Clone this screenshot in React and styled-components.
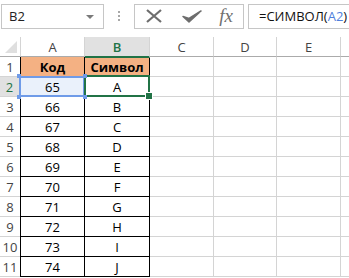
import styled, { createGlobalStyle, css } from 'styled-components';

const GlobalStyle = createGlobalStyle`
  html, body {
    margin: 0;
    padding: 0;
    background: #fff;
  }
  body {
    font-family: "Open Sans", "Liberation Sans", sans-serif;
    color: #000;
  }
`;

const codes = [65, 66, 67, 68, 69, 70, 71, 72, 73, 74];
const columns = ['A', 'B', 'C', 'D', 'E', ''];

const App = () => {
  return (
    <Page>
      <GlobalStyle />
      <Toolbar>
        <NameBox>
          <span>B2</span>
          <DropArrow />
        </NameBox>
        <Dots>
          <i /><i /><i />
        </Dots>
        <ActionBox>
          <svg width="20" height="14" viewBox="0 0 20 14">
            <path d="M3 1 L17 13 M17 1 L3 13" stroke="#6d6d6d" strokeWidth="2.2" fill="none" />
          </svg>
          <svg width="20" height="13" viewBox="0 0 20 13">
            <path d="M1 6.5 L7 12 L19 1 L7 8.5 Z" fill="#6d6d6d" stroke="#6d6d6d" strokeWidth="1.5" strokeLinejoin="round" />
          </svg>
          <Fx>fx</Fx>
        </ActionBox>
        <FormulaBox>
          =СИМВОЛ(<Ref>A2</Ref>)
        </FormulaBox>
      </Toolbar>

      <Sheet>
        <Corner><CornerMark /></Corner>
        {columns.map((c) => (
          <ColHead key={c || 'f'} $active={c === 'B'}>{c}</ColHead>
        ))}

        <RowHead>1</RowHead>
        <Cell $table $first $title>Код</Cell>
        <Cell $table $title>Символ</Cell>
        <Cell /><Cell /><Cell /><Cell />

        {codes.map((code, i) => {
          const row = i + 2;
          return [
            <RowHead key={`h${row}`} $active={row === 2}>{row}</RowHead>,
            <Cell key={`a${row}`} $table $first={row !== 2} $ref={row === 2}>
              {code}
              {row === 2 && (
                <>
                  <Handle $pos="tl" /><Handle $pos="tr" /><Handle $pos="bl" /><Handle $pos="br" />
                </>
              )}
            </Cell>,
            <Cell key={`b${row}`} $table $current={row === 2}>
              {String.fromCharCode(code)}
              {row === 2 && <FillHandle />}
            </Cell>,
            <Cell key={`c${row}`} />,
            <Cell key={`d${row}`} />,
            <Cell key={`e${row}`} />,
            <Cell key={`f${row}`} />,
          ];
        })}
      </Sheet>
    </Page>
  );
};

export default App;

const Page = styled.div`
  width: 349px;
  height: 278px;
  overflow: hidden;
  background: #fff;
`;

const Toolbar = styled.div`
  display: flex;
  align-items: center;
  height: 30px;
  padding: 2px 0 0 1px;
  box-sizing: border-box;
  margin-bottom: 7px;
`;

const boxBase = css`
  height: 25px;
  box-sizing: border-box;
  border: 1px solid #c6c6c6;
  background: #fff;
  display: flex;
  align-items: center;
`;

const NameBox = styled.div`
  ${boxBase};
  width: 103px;
  padding: 0 9px 0 7px;
  justify-content: space-between;
  font-size: 13px;
  color: #222;
`;

const DropArrow = styled.span`
  width: 0;
  height: 0;
  border-left: 4px solid transparent;
  border-right: 4px solid transparent;
  border-top: 4px solid #7a7a7a;
  margin-top: 1px;
`;

const Dots = styled.div`
  width: 30px;
  display: flex;
  flex-direction: column;
  align-items: center;
  gap: 2px;

  i {
    width: 2px;
    height: 2px;
    background: #a8a8a8;
  }
`;

const ActionBox = styled.div`
  ${boxBase};
  width: 110px;
  padding: 0 10px 0 9px;
  justify-content: space-between;
`;

const Fx = styled.span`
  font-family: "Liberation Serif", "DejaVu Serif", serif;
  font-style: italic;
  font-size: 19px;
  color: #707070;
  line-height: 1;
  margin-bottom: 2px;
`;

const FormulaBox = styled.div`
  ${boxBase};
  flex: 1;
  margin-left: 4px;
  padding-left: 10px;
  font-size: 13px;
  color: #111;
  border-right: none;
`;

const Ref = styled.span`
  color: #4f7fdc;
`;

const Sheet = styled.div`
  display: grid;
  grid-template-columns: 21px 64px 65px 64px 63px 64px 10px;
  grid-template-rows: 20px;
  grid-auto-rows: 20px;
  font-size: 13px;
`;

const Corner = styled.div`
  background: #fff;
  border-right: 1px solid #d4d4d4;
  border-bottom: 1px solid #ababab;
  position: relative;
`;

const CornerMark = styled.div`
  position: absolute;
  right: 3px;
  bottom: 3px;
  width: 0;
  height: 0;
  border-left: 12px solid transparent;
  border-bottom: 12px solid #dfdfdf;
`;

const ColHead = styled.div`
  display: flex;
  align-items: center;
  justify-content: center;
  background: ${(p) => (p.$active ? '#e1e1e1' : '#fff')};
  color: ${(p) => (p.$active ? '#217346' : '#444')};
  border-right: 1px solid #d4d4d4;
  border-bottom: ${(p) => (p.$active ? '2px solid #217346' : '1px solid #ababab')};
  margin-bottom: ${(p) => (p.$active ? '-1px' : '0')};
  position: relative;
  z-index: ${(p) => (p.$active ? 1 : 0)};
  font-weight: ${(p) => (p.$active ? 600 : 400)};
`;

const RowHead = styled.div`
  display: flex;
  align-items: center;
  justify-content: center;
  background: ${(p) => (p.$active ? '#e1e1e1' : '#fff')};
  color: ${(p) => (p.$active ? '#217346' : '#444')};
  border-right: ${(p) => (p.$active ? '2px solid #217346' : '1px solid #ababab')};
  border-bottom: 1px solid #d4d4d4;
  font-size: 13px;
`;

const Cell = styled.div`
  display: flex;
  align-items: center;
  justify-content: center;
  position: relative;
  box-sizing: border-box;
  border-right: 1px solid ${(p) => (p.$table ? '#000' : '#d4d4d4')};
  border-bottom: 1px solid ${(p) => (p.$table ? '#000' : '#d4d4d4')};
  background: ${(p) => (p.$title ? '#f4b183' : p.$ref ? '#eaf1fb' : '#fff')};
  font-weight: ${(p) => (p.$title ? 700 : 400)};
  box-shadow: ${(p) => (p.$first ? '-1px 0 0 #000' : 'none')};

  ${(p) =>
    p.$ref &&
    css`
      &::after {
        content: '';
        position: absolute;
        inset: -1px -1px -1px -2px;
        border: 2px solid #6f9be8;
        pointer-events: none;
      }
    `}

  ${(p) =>
    p.$current &&
    css`
      &::after {
        content: '';
        position: absolute;
        inset: -2px -1px -1px -1px;
        border: 2px solid #217346;
        z-index: 2;
        pointer-events: none;
      }
    `}
`;

const corners = {
  tl: 'top: -3px; left: -4px;',
  tr: 'top: -3px; right: -3px;',
  bl: 'bottom: -3px; left: -4px;',
  br: 'bottom: -3px; right: -3px;',
};

const Handle = styled.span`
  position: absolute;
  width: 4px;
  height: 4px;
  background: #6f9be8;
  z-index: 3;
  ${(p) => corners[p.$pos]};
`;

const FillHandle = styled.span`
  position: absolute;
  right: -4px;
  bottom: -4px;
  width: 6px;
  height: 6px;
  background: #217346;
  border: 1px solid #fff;
  z-index: 4;
`;
